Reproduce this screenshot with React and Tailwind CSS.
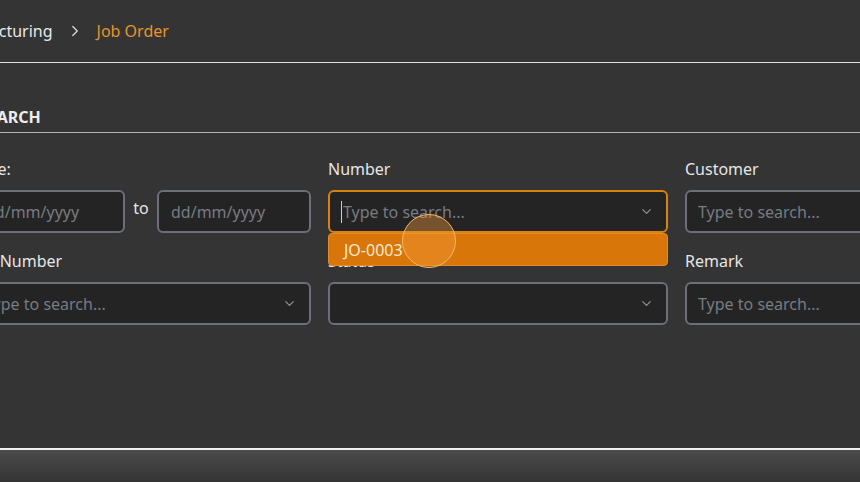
import { ChevronDown, ChevronRight } from 'lucide-react';

function Field({ label, placeholder, select, focused, children }) {
    return (
        <div className="relative flex flex-col">
            <label className="text-[16px] leading-6 text-[#e6e6e6] mb-[9px]">{label}</label>
            <div
                className={
                    'h-[43px] rounded-[6px] bg-[#242424] flex items-center pl-[11px] pr-[12px] border-2 ' +
                    (focused ? 'border-[#d9820f]' : 'border-[#6b6f78]')
                }
            >
                {focused && <span className="w-px h-[22px] bg-[#cfcfcf] mr-[1px]" />}
                <span className="flex-1 text-[16px] text-[#777b82] truncate">{placeholder}</span>
                {select && <ChevronDown size={15} className="text-[#8a8e96]" strokeWidth={2} />}
            </div>
            {children}
        </div>
    );
}

export default function App() {
    return (
        <div
            className="w-[860px] h-[482px] overflow-hidden bg-[#343434] flex flex-col"
            style={{ fontFamily: '"Noto Sans", "Open Sans", sans-serif' }}
        >
            {/* Breadcrumb */}
            <div className="h-[63px] shrink-0 border-b border-[#e2e2e2] flex items-center -ml-[59px] gap-[13px] text-[16px]">
                <span className="text-[#e8e8e8]">Manufacturing</span>
                <ChevronRight size={18} className="text-[#e0e0e0]" strokeWidth={1.6} />
                <span className="text-[#e8932c]">Job Order</span>
            </div>

            {/* Search */}
            <div className="flex-1 pt-[42px] -ml-[29px] w-[920px]">
                <div className="pb-[3px] border-b border-[#b5b5b5] text-[16px] leading-6 font-bold text-[#ececec] pl-[8px] w-[950px]">
                    SEARCH
                </div>
                <div className="grid grid-cols-[340px_340px_340px] gap-x-[17px] gap-y-[16px] pt-[24px]">
                    <div className="flex flex-col">
                        <label className="text-[16px] leading-6 text-[#e6e6e6] mb-[9px]">Date:</label>
                        <div className="flex items-center">
                            <div className="h-[43px] w-[154px] rounded-[6px] bg-[#242424] border-2 border-[#6b6f78] flex items-center px-[12px] text-[16px] text-[#777b82]">
                                dd/mm/yyyy
                            </div>
                            <span className="flex-1 text-center text-[16px] text-[#e6e6e6] -mt-[8px]">to</span>
                            <div className="h-[43px] w-[154px] rounded-[6px] bg-[#242424] border-2 border-[#6b6f78] flex items-center px-[12px] text-[16px] text-[#777b82]">
                                dd/mm/yyyy
                            </div>
                        </div>
                    </div>
                    <Field label="Number" placeholder="Type to search..." select focused>
                        <div className="absolute left-0 right-0 top-[76px] h-[33px] rounded-[4px] bg-[#d9760a] border border-[#e48a2a] flex items-center px-[15px] text-[16px] text-[#fbe9cf] z-10">
                            JO-0003
                        </div>
                        <div className="absolute left-[74px] top-[57px] w-[54px] h-[54px] rounded-full bg-[#f29a3a]/40 border border-[#f6b56c] z-20" />
                    </Field>
                    <Field label="Customer" placeholder="Type to search..." />
                    <Field label="Ref Number" placeholder="Type to search..." select />
                    <Field label="Status" placeholder="" select />
                    <Field label="Remark" placeholder="Type to search..." />
                </div>
            </div>

            {/* Footer */}
            <div className="h-[34px] shrink-0 border-t-2 border-[#f0f0f0] bg-gradient-to-b from-[#4b4b4b] to-[#343434]" />
        </div>
    );
}
